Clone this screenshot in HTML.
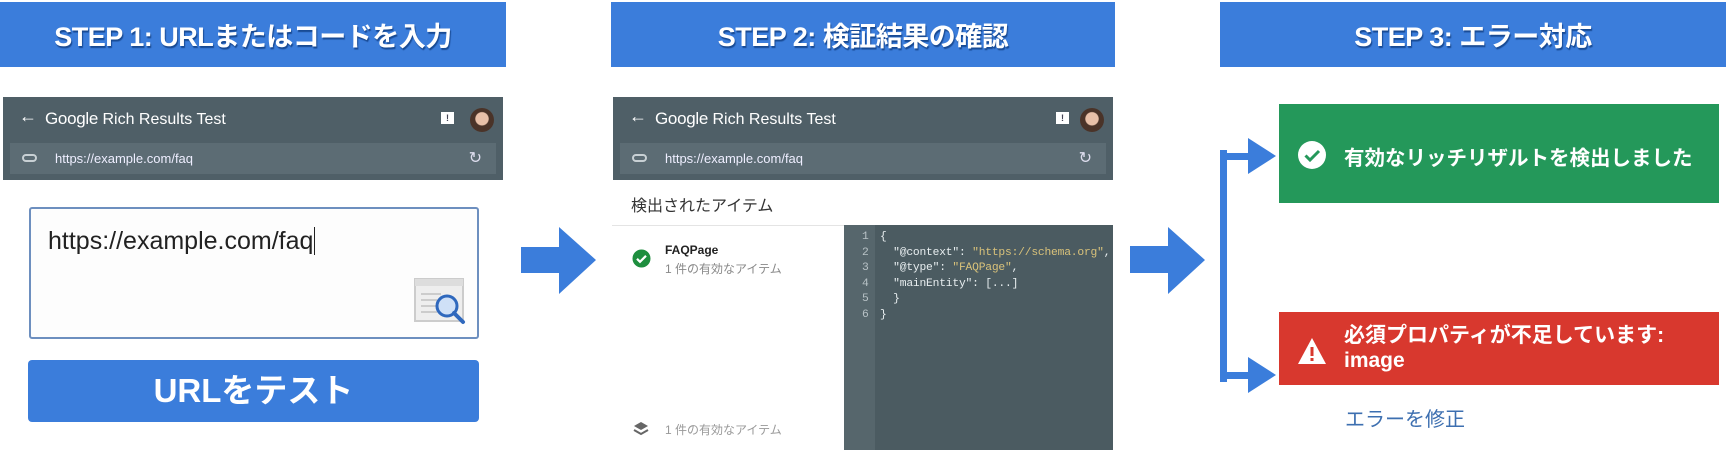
<!DOCTYPE html>
<html><head><meta charset="utf-8"><style>
*{margin:0;padding:0;box-sizing:border-box}
body{width:1726px;height:450px;background:#fff;position:relative;overflow:hidden;font-family:"Liberation Sans","Noto Sans CJK JP",sans-serif}
.a{position:absolute}
.ban{position:absolute;top:2px;height:65px;background:#3b7ddb;color:#fff;font-weight:bold;font-size:27px;letter-spacing:-0.5px;display:flex;align-items:center;justify-content:center;text-shadow:1px 2px 1px rgba(0,40,100,.6)}
.hdr{position:absolute;top:97px;height:83px;background:#4f5f67}
.hdr .t{position:absolute;left:42px;top:12px;color:#fff;font-size:16px}
.hdr .t b{font-size:17px;font-weight:normal;letter-spacing:-.3px}
.url{position:absolute;left:7px;right:7px;top:46px;height:31px;background:#5c6c74;color:#eef;font-size:13px}
.url span{position:absolute;left:45px;top:8px}
.av{position:absolute;width:24px;height:24px;border-radius:50%;background:radial-gradient(circle at 50% 45%,#e8c0a8 0 35%,#4a3328 40%);top:11px}
.fb{position:absolute;width:13px;height:12px;background:#fff;top:15px;color:#445;font-size:9px;font-weight:bold;text-align:center;line-height:12px}
.code{font-family:"Liberation Mono",monospace;font-size:11.3px;letter-spacing:-0.2px;color:#e8eef0;line-height:15.5px;white-space:pre}
.s{color:#d9c27a}
</style></head><body>
<div class="ban" style="left:0;width:506px">STEP 1: URLまたはコードを入力</div>
<div class="ban" style="left:611px;width:504px">STEP 2: 検証結果の確認</div>
<div class="ban" style="left:1220px;width:506px">STEP 3: エラー対応</div>

<!-- panel 1 -->
<div class="hdr" style="left:3px;width:500px">
<div class="a" style="left:16px;top:9px;color:#fff;font-size:18px">←</div>
<div class="t"><b>Google</b> Rich Results Test</div>
<div class="fb" style="left:438px">!</div>
<div class="av" style="left:467px"></div>
<div class="url"><div class="a" style="left:12px;top:11px;width:15px;height:8px;border:2px solid #c8d0d4;border-radius:4px"></div><span>https://example.com/faq</span><div class="a" style="right:14px;top:5px;color:#dde;font-size:16px">↻</div></div>
</div>
<div class="a" style="left:29px;top:207px;width:450px;height:132px;border:2px solid #6d8fbf;border-radius:3px;background:#fdfdfd">
<div class="a" style="left:17px;top:18px;font-size:25px;color:#222">https://example.com/faq<span style="border-left:1.5px solid #222;margin-left:1px"></span></div>
<svg class="a" style="left:382px;top:68px" width="56" height="50" viewBox="0 0 56 50"><rect x="2" y="2" width="48" height="42" fill="#eee" stroke="#ccc" stroke-width="2"/><rect x="2" y="2" width="48" height="7" fill="#ddd"/><g stroke="#ccc" stroke-width="2"><line x1="8" y1="17" x2="28" y2="17"/><line x1="8" y1="23" x2="24" y2="23"/><line x1="8" y1="29" x2="24" y2="29"/><line x1="8" y1="35" x2="24" y2="35"/></g><circle cx="34" cy="29" r="10" fill="#cfe0f7" stroke="#2f68bd" stroke-width="3"/><line x1="41" y1="36" x2="50" y2="45" stroke="#2f68bd" stroke-width="4" stroke-linecap="round"/></svg>
</div>
<div class="a" style="left:28px;top:360px;width:451px;height:62px;background:#3b7ddb;border-radius:4px;color:#fff;font-weight:bold;font-size:33px;text-align:center;line-height:62px">URLをテスト</div>

<!-- arrow 1 -->
<svg class="a" style="left:520px;top:226px" width="80" height="70"><polygon points="1,21 39,21 39,1 76,34 39,68 39,47 1,47" fill="#3b7ddb"/></svg>

<!-- panel 2 -->
<div class="hdr" style="left:613px;width:500px">
<div class="a" style="left:16px;top:9px;color:#fff;font-size:18px">←</div>
<div class="t"><b>Google</b> Rich Results Test</div>
<div class="fb" style="left:443px">!</div>
<div class="av" style="left:467px"></div>
<div class="url"><div class="a" style="left:12px;top:11px;width:15px;height:8px;border:2px solid #c8d0d4;border-radius:4px"></div><span>https://example.com/faq</span><div class="a" style="right:14px;top:5px;color:#dde;font-size:16px">↻</div></div>
</div>
<div class="a" style="left:631px;top:192px;font-size:16px;color:#333">検出されたアイテム</div>
<div class="a" style="left:612px;top:225px;width:232px;height:1px;background:#e4e4e4"></div>
<svg class="a" style="left:632px;top:249px" width="19" height="19"><circle cx="9.5" cy="9.5" r="9" fill="#1e8e3e"/><path d="M5 9.8l3 3 6-6" stroke="#fff" stroke-width="2.2" fill="none"/></svg>
<div class="a" style="left:665px;top:243px;font-size:12px;font-weight:bold;color:#222">FAQPage</div>
<div class="a" style="left:665px;top:260px;font-size:12px;color:#888">1 件の有効なアイテム</div>
<svg class="a" style="left:633px;top:421px" width="16" height="16"><path d="M8 1L1 5l7 4 7-4z" fill="#666"/><path d="M1 9l7 4 7-4" stroke="#666" stroke-width="2" fill="none"/></svg>
<div class="a" style="left:665px;top:421px;font-size:12px;color:#999">1 件の有効なアイテム</div>
<div class="a" style="left:844px;top:225px;width:269px;height:225px;background:#4b5b61"></div>
<div class="a" style="left:844px;top:225px;width:31px;height:225px;background:#56666c"></div>
<div class="a code" style="left:862px;top:230px;color:#b8c2c6">1
2
3
4
5
6</div>
<div class="a code" style="left:880px;top:230px">{
  "@context": <span class="s">"https://schema.org"</span>,
  "@type": <span class="s">"FAQPage"</span>,
  "mainEntity": [...]
  }
}</div>

<!-- arrow 2 -->
<svg class="a" style="left:1128px;top:226px" width="80" height="70"><polygon points="2,20 40,20 40,1 77,34 40,68 40,47 2,47" fill="#3b7ddb"/></svg>

<!-- bracket -->
<div class="a" style="left:1220px;top:150px;width:7px;height:232px;background:#3b7ddb"></div>
<div class="a" style="left:1220px;top:153px;width:32px;height:7px;background:#3b7ddb"></div>
<div class="a" style="left:1220px;top:372px;width:32px;height:7px;background:#3b7ddb"></div>
<svg class="a" style="left:1248px;top:138px" width="30" height="38"><polygon points="0,0 28,18 0,36" fill="#3b7ddb"/></svg>
<svg class="a" style="left:1248px;top:357px" width="30" height="38"><polygon points="0,0 28,18 0,36" fill="#3b7ddb"/></svg>

<div class="a" style="left:1279px;top:104px;width:440px;height:99px;background:#24985a"></div>
<svg class="a" style="left:1297px;top:140px" width="30" height="30"><circle cx="15" cy="15" r="14" fill="#fff"/><path d="M8.5 15.5l4.5 4.5 9-9" stroke="#24985a" stroke-width="3" fill="none"/></svg>
<div class="a" style="left:1344px;top:141px;font-size:20.5px;font-weight:bold;color:#fff">有効なリッチリザルトを検出しました</div>

<div class="a" style="left:1279px;top:312px;width:440px;height:73px;background:#d8382e"></div>
<svg class="a" style="left:1297px;top:337px" width="30" height="28"><polygon points="15,1 29,27 1,27" fill="#fff"/><rect x="13.5" y="10" width="3" height="9" fill="#d8382e"/><rect x="13.5" y="21" width="3" height="3" fill="#d8382e"/></svg>
<div class="a" style="left:1344px;top:323px;font-size:21px;font-weight:bold;color:#fff;line-height:25px">必須プロパティが不足しています:<br>image</div>
<div class="a" style="left:1345px;top:403px;font-size:20px;color:#3d6fb0">エラーを修正</div>
</body></html>
